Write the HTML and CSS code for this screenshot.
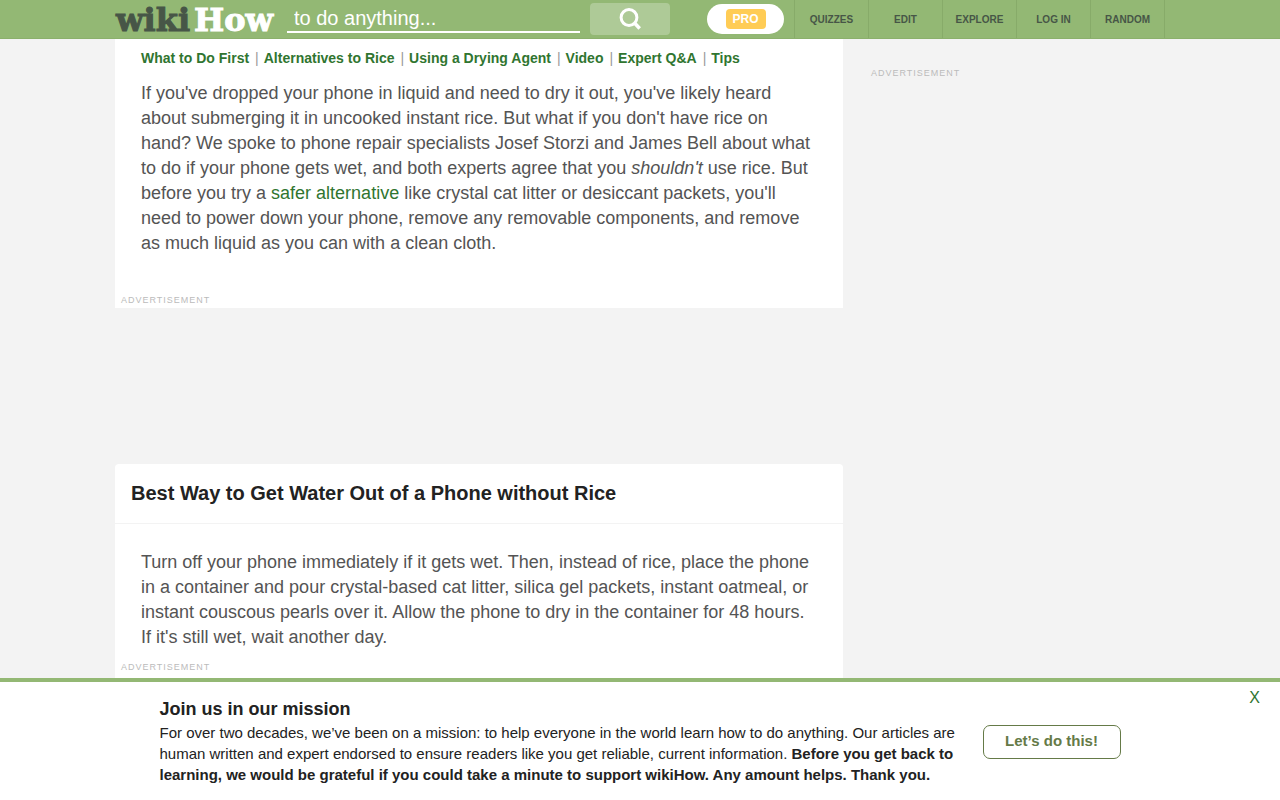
FILE: index.html
```html
<!DOCTYPE html>
<html lang="en">
<head>
<meta charset="utf-8">
<meta name="viewport" content="width=device-width, initial-scale=1">
<title>Best Way to Get Water Out of a Phone without Rice - wikiHow</title>
<link rel="stylesheet" href="styles.css">
</head>
<body>
<header class="header">
  <div class="header-inner">
    <a class="logo" href="#"><span class="logo-wiki">wiki</span><span class="logo-how">How</span></a>
    <form class="search">
      <input class="search-input" type="text" aria-label="Search" placeholder="to do anything...">
      <button class="search-button" type="button" aria-label="Search">
        <svg width="22" height="22" viewBox="0 0 22 22" fill="none" stroke="#fff"><circle cx="10" cy="9.5" r="7.9" stroke-width="3"/><path d="M15.5 15l5.2 5.4" stroke-width="3.6"/></svg>
      </button>
    </form>
    <a class="pro" href="#"><span class="pro-badge">PRO</span></a>
    <nav class="menu">
      <a href="#">QUIZZES</a>
      <a href="#">EDIT</a>
      <a href="#">EXPLORE</a>
      <a href="#">LOG IN</a>
      <a href="#">RANDOM</a>
    </nav>
  </div>
</header>
<div class="page">
  <main class="column">
    <section class="card intro">
      <nav class="toc">
        <a href="#first">What to Do First</a><span>|</span><a href="#rice">Alternatives to Rice</a><span>|</span><a href="#drying">Using a Drying Agent</a><span>|</span><a href="#video">Video</a><span>|</span><a href="#qa">Expert Q&amp;A</a><span>|</span><a href="#tips">Tips</a>
      </nav>
      <p class="text">If you've dropped your phone in liquid and need to dry it out, you've likely heard about submerging it in uncooked instant rice. But what if you don't have rice on hand? We spoke to phone repair specialists Josef Storzi and James Bell about what to do if your phone gets wet, and both experts agree that you <i>shouldn't</i> use rice. But before you try a <a href="#rice">safer alternative</a> like crystal cat litter or desiccant packets, you'll need to power down your phone, remove any removable components, and remove as much liquid as you can with a clean cloth.</p>
      <div class="ad-label">ADVERTISEMENT</div>
    </section>
    <section class="card answer">
      <h2 class="card-title">Best Way to Get Water Out of a Phone without Rice</h2>
      <p class="text">Turn off your phone immediately if it gets wet. Then, instead of rice, place the phone in a container and pour crystal-based cat litter, silica gel packets, instant oatmeal, or instant couscous pearls over it. Allow the phone to dry in the container for 48 hours. If it's still wet, wait another day.</p>
      <div class="ad-label">ADVERTISEMENT</div>
    </section>
  </main>
  <aside class="sidebar">
    <div class="ad-label">ADVERTISEMENT</div>
  </aside>
</div>
<section class="banner">
  <div class="banner-inner">
    <div class="banner-copy">
      <h3 class="banner-title">Join us in our mission</h3>
      <p class="banner-text">For over two decades, we’ve been on a mission: to help everyone in the world learn how to do anything. Our articles are human written and expert endorsed to ensure readers like you get reliable, current information. <b>Before you get back to learning, we would be grateful if you could take a minute to support wikiHow. Any amount helps. Thank you.</b></p>
    </div>
    <button class="banner-button" type="button">Let’s do this!</button>
  </div>
  <button class="banner-close" type="button" aria-label="Close">X</button>
</section>
</body>
</html>
```
FILE: styles.css
```css
* {
  box-sizing: border-box;
}

body {
  margin: 0;
  padding: 39px 0 100px;
  background: #f3f3f3;
  color: #545454;
  font-family: "Liberation Sans", Arial, sans-serif;
}

a {
  color: #307530;
  text-decoration: none;
}

.header {
  position: fixed;
  top: 0;
  left: 0;
  right: 0;
  z-index: 2;
  background: #93b874;
  border-bottom: 1px solid #8bb06c;
}

.header-inner {
  display: flex;
  align-items: center;
  max-width: 1050px;
  height: 38px;
  margin: 0 auto;
}

.logo {
  display: flex;
  gap: 4px;
  width: 172px;
  padding: 2px 0 0 1px;
  font: bold 32px/36px "DejaVu Serif", serif;
  -webkit-text-stroke: 1px currentColor;
}

.logo-wiki {
  color: #475647;
}

.logo-how {
  color: #fff;
}

.search {
  display: flex;
  flex: 1;
  gap: 10px;
}

.search-input {
  flex: 1;
  min-width: 0;
  height: 30px;
  padding: 2px 7px 0;
  border: 0;
  border-bottom: 2px solid #fff;
  background: transparent;
  color: #fff;
  font: 20px "Liberation Sans", Arial, sans-serif;
  outline: 0;
}

.search-input::placeholder {
  color: #fff;
}

.search-button {
  display: flex;
  align-items: center;
  justify-content: center;
  width: 80px;
  height: 32px;
  padding: 0;
  border: 0;
  border-radius: 4px;
  background: #aeca97;
}

.pro {
  display: flex;
  align-items: center;
  justify-content: center;
  width: 77px;
  height: 30px;
  margin: 0 10px 0 37px;
  border-radius: 15px;
  background: #fff;
}

.pro-badge {
  width: 40px;
  border-radius: 4px;
  background: #ffcc55;
  color: #fff;
  font-size: 12px;
  font-weight: bold;
  line-height: 20px;
  text-align: center;
}

.menu {
  display: flex;
  border-right: 1px solid #87ab69;
}

.menu a {
  width: 74px;
  padding-top: 2px;
  border-left: 1px solid #87ab69;
  color: #475647;
  font-size: 10px;
  font-weight: bold;
  line-height: 36px;
  text-align: center;
}

.page {
  display: flex;
  gap: 28px;
  max-width: 1050px;
  margin: 0 auto;
}

.column {
  flex: 0 1 728px;
}

.card {
  background: #fff;
}

.intro {
  padding-top: 9px;
}

.toc {
  padding: 0 26px;
  font-size: 14px;
  font-weight: bold;
  line-height: 20px;
}

.toc span {
  margin: 0 5px 0 6px;
  color: #999;
  font-weight: normal;
}

.text {
  margin: 0;
  padding: 0 26px;
  font-size: 18px;
  line-height: 25px;
}

.intro .text {
  padding-top: 13px;
  padding-bottom: 39px;
}

.ad-label {
  padding: 0 6px 2px;
  color: #bbb;
  font-size: 9px;
  letter-spacing: 1px;
  line-height: 11px;
}

.answer {
  margin-top: 156px;
  padding-bottom: 24px;
  border-radius: 4px;
}

.card-title {
  margin: 0;
  padding: 16px 16px 17px;
  border-bottom: 1px solid #f3f3f3;
  color: #222;
  font-size: 20px;
  line-height: 26px;
}

.answer .text {
  padding-top: 26px;
  padding-bottom: 12px;
}

.sidebar {
  flex: 1;
  padding-top: 29px;
}

.sidebar .ad-label {
  padding-left: 0;
}

.banner {
  position: fixed;
  right: 0;
  bottom: 0;
  left: 0;
  z-index: 2;
  padding: 16px 0 15px;
  border-top: 4px solid #93b874;
  background: #fff;
  color: #222;
}

.banner-inner {
  display: flex;
  align-items: center;
  justify-content: space-between;
  gap: 24px;
  max-width: 961px;
  margin: 0 auto;
}

.banner-copy {
  flex: 0 1 800px;
}

.banner-title {
  margin: 0;
  padding-bottom: 2px;
  font-size: 18px;
  line-height: 22px;
}

.banner-text {
  margin: 0;
  font-size: 15px;
  line-height: 21px;
}

.banner-button {
  flex: none;
  width: 138px;
  height: 34px;
  padding: 0 0 2px;
  border: 1px solid #657a47;
  border-radius: 7px;
  background: #fff;
  color: #657a47;
  font: bold 15px "Liberation Sans", Arial, sans-serif;
}

.banner-close {
  position: absolute;
  top: 7px;
  right: 20px;
  padding: 0;
  border: 0;
  background: none;
  color: #307530;
  font: 16px/18px "Liberation Sans", Arial, sans-serif;
}
```
